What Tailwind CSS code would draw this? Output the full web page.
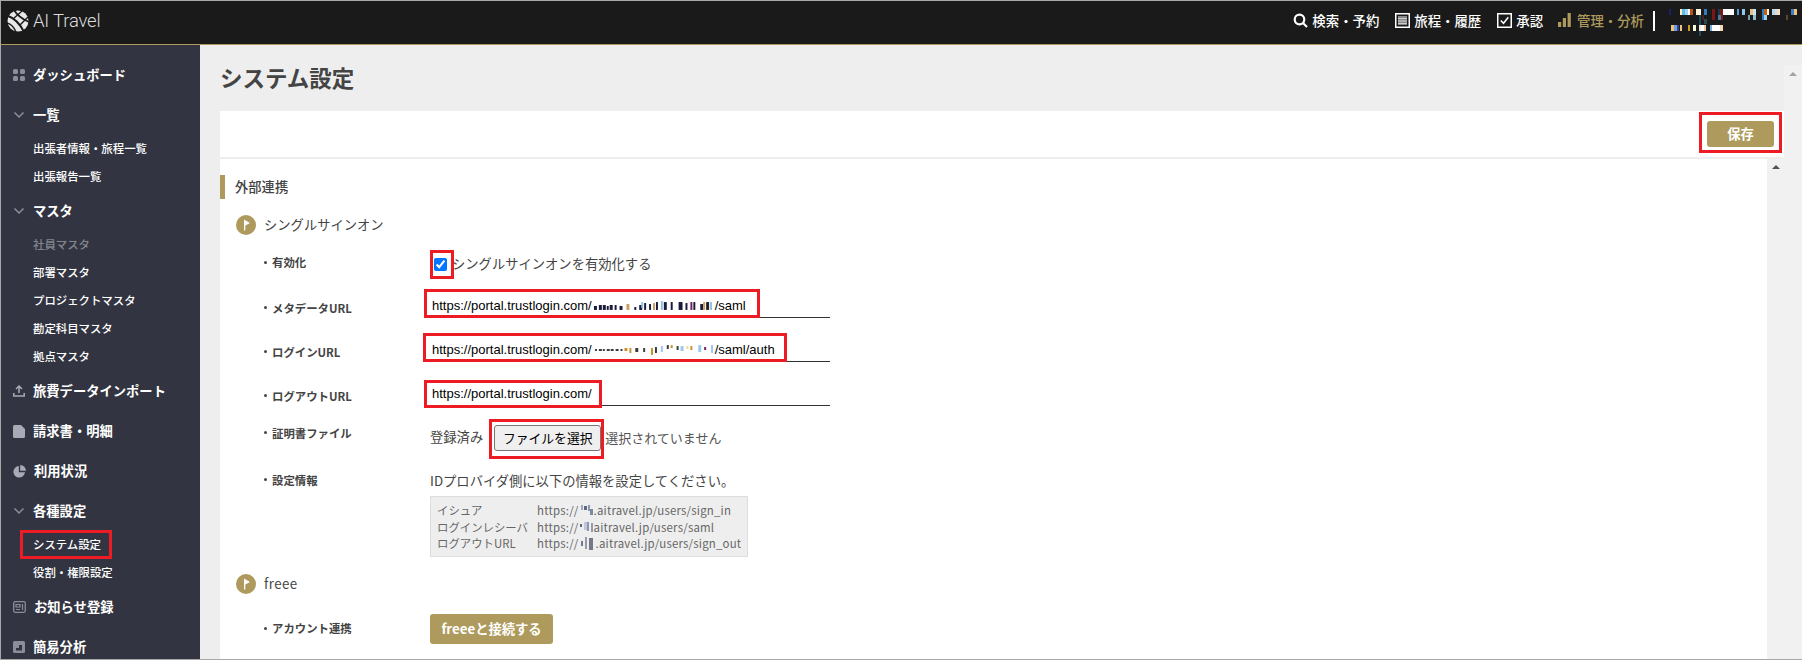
<!DOCTYPE html>
<html lang="ja">
<head>
<meta charset="utf-8">
<title>システム設定</title>
<script src="https://cdn.jsdelivr.net/npm/@tailwindcss/browser@4"></script>
</head>
<body class="bg-white">
<div class="relative w-[1802px] h-[660px] overflow-hidden font-['Noto_Sans_CJK_JP','Noto_Sans',sans-serif]">
  <div class="flex flex-col h-full border-t border-l border-b border-[#a8a8a8]">
    <!-- header -->
    <header class="flex h-[44px] shrink-0 items-center bg-[#1a1a1a] border-b border-[#ae9a5d]">
      <div class="flex items-center pl-[6px] pb-[3px] gap-[4px]">
        <svg width="22" height="22" viewBox="0 0 22 22">
          <circle cx="11" cy="11" r="10.5" fill="#e8e8e8"/>
          <g stroke="#1a1a1a" fill="none">
            <path d="M1 6 C7 8 12 12 17 22" stroke-width="2"/>
            <path d="M7 0 C10 5 15 9 22 12" stroke-width="1.8"/>
            <path d="M0 13 C4 14 7 17 9 22" stroke-width="1.4"/>
            <path d="M15 1 L6 9" stroke-width="1.4"/>
            <path d="M21 7 L13 15" stroke-width="1.4"/>
          </g>
        </svg>
        <span class="font-['Roboto',sans-serif] font-light text-[18.5px] leading-none tracking-[-0.2px] text-[#dddddd]">AI Travel</span>
      </div>
      <nav class="ml-auto flex items-center h-full text-[13.4px] font-medium text-white">
        <a class="flex items-center gap-[4px] pb-[4px]">
          <svg width="15" height="15" viewBox="0 0 15 15" fill="none" stroke="#fff" stroke-width="2.2"><circle cx="6.5" cy="6.5" r="4.8"/><path d="M10 10 L14 14"/></svg>
          検索・予約
        </a>
        <a class="flex items-center gap-[4px] ml-[16px] pb-[4px]">
          <svg width="15" height="15" viewBox="0 0 15 15"><rect x="0.75" y="0.75" width="13.5" height="13.5" fill="none" stroke="#fff" stroke-width="1.5"/><rect x="3" y="3" width="9" height="9" fill="#8a8a8a"/><path d="M3 5.5H12M3 8H12M3 10.5H12" stroke="#ddd" stroke-width="0.8"/></svg>
          旅程・履歴
        </a>
        <a class="flex items-center gap-[4px] ml-[16px] pb-[4px]">
          <svg width="15" height="15" viewBox="0 0 15 15" fill="none"><rect x="0.75" y="0.75" width="13.5" height="13.5" stroke="#fff" stroke-width="1.5"/><path d="M3.8 7.5 L6.5 10.3 L11.3 4.3" stroke="#fff" stroke-width="1.5"/></svg>
          承認
        </a>
        <a class="flex items-center gap-[6px] ml-[15px] pb-[4px] text-[#ae9a5d]">
          <svg width="13" height="14" viewBox="0 0 13 14" fill="#ae9a5d"><rect x="0" y="9" width="3.2" height="5"/><rect x="4.8" y="5" width="3.2" height="9"/><rect x="9.6" y="0" width="3.2" height="14"/></svg>
          管理・分析
        </a>
        <span class="w-[2px] h-[20px] bg-white ml-[9px] mb-[4px]"></span>
        <svg class="ml-[5px] self-start mt-[3px]" width="142" height="36" viewBox="0 0 142 36">
          <rect x="9" y="5" width="2" height="6" fill="#1a1f6e"/><rect x="20" y="5" width="2" height="6" fill="#fff0c8"/><rect x="22" y="5" width="3" height="6" fill="#5fb8e8"/><rect x="25" y="5" width="3" height="6" fill="#9cd4f0"/><rect x="28" y="5" width="2" height="6" fill="#fff"/><rect x="30" y="5" width="3" height="6" fill="#c0501c"/><rect x="36" y="5" width="5" height="6" fill="#fff4d8"/><rect x="44" y="5" width="3" height="6" fill="#2f7fc0"/><rect x="52" y="5" width="3" height="11" fill="#7a1818"/><rect x="58" y="5" width="2" height="6" fill="#1a3a50"/><rect x="60" y="5" width="3" height="11" fill="#7a1818"/><rect x="63" y="5" width="11" height="6" fill="#fff"/><rect x="77" y="5" width="2" height="6" fill="#4f9fd8"/><rect x="82" y="5" width="3" height="6" fill="#8fc8f0"/><rect x="90" y="5" width="3" height="6" fill="#f0c080"/><rect x="93" y="5" width="3" height="6" fill="#c0e8f4"/><rect x="102" y="5" width="2" height="6" fill="#2f7fc0"/><rect x="104" y="5" width="3" height="6" fill="#c0601c"/><rect x="107" y="5" width="2" height="6" fill="#fff8e0"/><rect x="112" y="5" width="3" height="6" fill="#b0d8e8"/><rect x="115" y="5" width="3" height="6" fill="#ddd"/><rect x="118" y="5" width="2" height="6" fill="#f8e0c0"/><rect x="131" y="5" width="3" height="6" fill="#4080c0"/><rect x="134" y="5" width="3" height="6" fill="#f0c080"/>
          <rect x="39" y="11" width="2" height="21" fill="#1a4a60"/><rect x="42" y="11" width="2" height="5" fill="#4a2020"/><rect x="44" y="15" width="3" height="5" fill="#2a4a50"/><rect x="58" y="11" width="3" height="5" fill="#4a7a9a"/><rect x="88" y="11" width="2" height="5" fill="#7aa0b0"/><rect x="93" y="11" width="3" height="5" fill="#90c0d8"/><rect x="102" y="11" width="2" height="5" fill="#2f7fc0"/><rect x="104" y="11" width="3" height="5" fill="#a0d0e8"/><rect x="126" y="11" width="2" height="5" fill="#5a4a2a"/>
          <rect x="11" y="21" width="3" height="6" fill="#e8c080"/><rect x="14" y="21" width="3" height="6" fill="#70a0d8"/><rect x="17" y="21" width="2" height="6" fill="#3040a0"/><rect x="20" y="21" width="2" height="6" fill="#f0c080"/><rect x="28" y="21" width="2" height="6" fill="#d09820"/><rect x="33" y="21" width="3" height="6" fill="#f0f8e0"/><rect x="39" y="21" width="2" height="6" fill="#f8e8d8"/><rect x="41" y="21" width="3" height="6" fill="#fff"/><rect x="44" y="21" width="2" height="6" fill="#e8c8a0"/><rect x="50" y="21" width="2" height="6" fill="#70b0e0"/><rect x="52" y="21" width="8" height="6" fill="#fff"/><rect x="60" y="21" width="3" height="6" fill="#f8d8b0"/>
        </svg>
      </nav>
    </header>

    <div class="flex flex-1 min-h-0">
      <!-- sidebar -->
      <aside class="w-[199px] shrink-0 bg-[#323541] pt-[10px] text-white overflow-hidden">
        <div class="flex h-[40px] items-center gap-[8px] pl-[12px] text-[13.3px] font-bold">
          <svg width="12" height="12" viewBox="0 0 12 12" fill="#8b8e9a"><rect x="0" y="0" width="5" height="5" rx="1.6"/><rect x="7" y="0" width="5" height="5" rx="1.6"/><rect x="0" y="7" width="5" height="5" rx="1.6"/><rect x="7" y="7" width="5" height="5" rx="1.6"/></svg>
          ダッシュボード
        </div>
        <div class="flex h-[40px] items-center gap-[8px] pl-[12px] text-[13.3px] font-bold">
          <svg width="12" height="12" viewBox="0 0 12 12" fill="none" stroke="#8b8e9a" stroke-width="1.5"><path d="M1.5 3.5 L6 8 L10.5 3.5"/></svg>
          一覧
        </div>
        <div class="flex h-[28px] items-center pl-[32px] text-[11.4px] font-medium">出張者情報・旅程一覧</div>
        <div class="flex h-[28px] items-center pl-[32px] text-[11.4px] font-medium">出張報告一覧</div>
        <div class="flex h-[40px] items-center gap-[8px] pl-[12px] text-[13.3px] font-bold">
          <svg width="12" height="12" viewBox="0 0 12 12" fill="none" stroke="#8b8e9a" stroke-width="1.5"><path d="M1.5 3.5 L6 8 L10.5 3.5"/></svg>
          マスタ
        </div>
        <div class="flex h-[28px] items-center pl-[32px] text-[11.4px] font-medium text-[#83858e]">社員マスタ</div>
        <div class="flex h-[28px] items-center pl-[32px] text-[11.4px] font-medium">部署マスタ</div>
        <div class="flex h-[28px] items-center pl-[32px] text-[11.4px] font-medium">プロジェクトマスタ</div>
        <div class="flex h-[28px] items-center pl-[32px] text-[11.4px] font-medium">勘定科目マスタ</div>
        <div class="flex h-[28px] items-center pl-[32px] text-[11.4px] font-medium">拠点マスタ</div>
        <div class="flex h-[40px] items-center gap-[8px] pl-[12px] text-[13.3px] font-bold">
          <svg width="12" height="12" viewBox="0 0 12 12" fill="none" stroke="#a8abb5" stroke-width="1.5"><path d="M6 8 V1.5 M3 4 L6 1 L9 4"/><path d="M0.8 8 V11 H11.2 V8"/></svg>
          旅費データインポート
        </div>
        <div class="flex h-[40px] items-center gap-[8px] pl-[12px] text-[13.3px] font-bold">
          <svg width="12" height="13" viewBox="0 0 12 13" fill="#a8abb5"><path d="M1.5 0 H8 L12 4 V11.5 a1.5 1.5 0 0 1 -1.5 1.5 H1.5 A1.5 1.5 0 0 1 0 11.5 V1.5 A1.5 1.5 0 0 1 1.5 0 Z"/></svg>
          請求書・明細
        </div>
        <div class="flex h-[40px] items-center gap-[8px] pl-[12px] text-[13.3px] font-bold">
          <svg width="13" height="13" viewBox="0 0 13 13" fill="#a8abb5"><path d="M5.8 1 A5.8 5.8 0 1 0 12 7.2 H5.8 Z"/><path d="M7.2 0 A5.8 5.8 0 0 1 13 5.8 H7.2 Z"/></svg>
          利用状況
        </div>
        <div class="flex h-[40px] items-center gap-[8px] pl-[12px] text-[13.3px] font-bold">
          <svg width="12" height="12" viewBox="0 0 12 12" fill="none" stroke="#8b8e9a" stroke-width="1.5"><path d="M1.5 3.5 L6 8 L10.5 3.5"/></svg>
          各種設定
        </div>
        <div class="flex h-[28px] items-center pl-[32px] text-[11.4px] font-medium">システム設定</div>
        <div class="flex h-[28px] items-center pl-[32px] text-[11.4px] font-medium">役割・権限設定</div>
        <div class="flex h-[40px] items-center gap-[8px] pl-[12px] text-[13.3px] font-bold">
          <svg width="13" height="12" viewBox="0 0 13 12" fill="none" stroke="#8b8e9a" stroke-width="1.3"><rect x="0.7" y="0.7" width="11.6" height="10.6" rx="1.5"/><path d="M3 3.5H7V6H3ZM3 8.5H7M9.5 3V9" stroke-width="1.2"/></svg>
          お知らせ登録
        </div>
        <div class="flex h-[40px] items-center gap-[8px] pl-[12px] text-[13.3px] font-bold">
          <svg width="12" height="12" viewBox="0 0 12 12"><rect width="12" height="12" rx="1.5" fill="#8b8e9a"/><path d="M3 9.5 V7 H6 V4 H9 V9.5 Z" fill="#323541"/></svg>
          簡易分析
        </div>
      </aside>

      <!-- main -->
      <main class="flex flex-1 min-w-0 bg-[#eeeeee]">
        <div class="flex flex-col flex-1 min-w-0 pl-[20px]">
          <h1 class="flex h-[66px] shrink-0 items-center text-[22.5px] font-bold text-[#444444]">システム設定</h1>
          <div class="flex h-[46px] shrink-0 items-center justify-end bg-white pr-[10px]">
            <button class="w-[67px] h-[26px] rounded-[3px] bg-[#ae9a5d] text-[13.3px] font-bold text-white">保存</button>
          </div>
          <div class="flex flex-1 min-h-0 mt-[2px]">
            <div class="flex-1 min-w-0 bg-white overflow-hidden text-[#444444]">
              <h2 class="mt-[16px] flex h-[24px] items-center border-l-[5px] border-[#ae9a5d] pl-[10px] text-[13.3px] font-medium">外部連携</h2>

              <h3 class="mt-[16px] ml-[16px] flex h-[20px] items-center gap-[8px] text-[13.3px] font-normal">
                <svg width="20" height="20" viewBox="0 0 20 20"><circle cx="10" cy="10" r="10" fill="#ae9a5d"/><path d="M8 4.5 L14 8 L9.3 10.6 V15.5 H8 Z" fill="#fff"/></svg>
                シングルサインオン
              </h3>

              <div class="mt-[15px] ml-[44px] flex h-[28px] items-center">
                <div class="w-[166px] flex items-center text-[11.4px] font-bold pb-[2px]"><span class="w-[3px] h-[3px] rounded-full bg-[#444444] mr-[5px]"></span>有効化</div>
                <label class="flex items-center text-[13.3px]"><input type="checkbox" checked class="w-[13px] h-[13px] ml-[4px] mr-[5px] accent-[#0075ff]">シングルサインオンを有効化する</label>
              </div>

              <div class="mt-[11px] ml-[44px] flex h-[29px]">
                <div class="w-[166px] flex items-start pt-[11px] text-[11.4px] font-bold leading-[16px]"><span class="w-[3px] h-[3px] rounded-full bg-[#444444] mr-[5px] mt-[6px]"></span>メタデータURL</div>
                <div class="-ml-[6px] w-[406px] h-[29px] border-b border-[#333333] pl-[8px] flex items-center pt-[5px] font-['Liberation_Sans',sans-serif] text-[13px] text-black">
                  https://portal.trustlogin.com/<svg width="123" height="10" viewBox="0 0 125 10" class="shrink-0"><g fill="#1a1a3a"><rect x="2" y="5" width="3" height="4"/><rect x="7" y="4" width="3" height="5"/><rect x="11" y="4" width="3" height="5"/><rect x="15" y="5" width="2" height="4"/><rect x="18" y="4" width="3" height="5"/><rect x="23" y="4" width="2" height="5"/><rect x="28" y="5" width="3" height="4"/><rect x="43" y="6" width="2" height="3"/><rect x="48" y="4" width="3" height="5"/><rect x="53" y="2" width="2" height="7"/><rect x="58" y="3" width="2" height="6"/><rect x="65" y="1" width="2" height="8"/><rect x="73" y="1" width="3" height="8"/><rect x="80" y="1" width="2" height="8"/><rect x="88" y="1" width="4" height="8"/><rect x="95" y="2" width="2" height="7"/><rect x="103" y="1" width="2" height="8"/><rect x="110" y="3" width="3" height="6"/></g><g fill="#c8a060"><rect x="35" y="3" width="3" height="6"/><rect x="62" y="2" width="2" height="7"/><rect x="113" y="1" width="2" height="8"/></g><g fill="#8fc0e8"><rect x="50" y="1" width="2" height="6"/><rect x="70" y="0" width="2" height="9"/><rect x="120" y="1" width="2" height="8"/></g><rect x="116" y="1" width="3" height="8" fill="#222"/><rect x="100" y="1" width="2" height="8" fill="#7a1a60"/></svg>/saml
                </div>
              </div>

              <div class="mt-[15px] ml-[44px] flex h-[29px]">
                <div class="w-[166px] flex items-start pt-[11px] text-[11.4px] font-bold leading-[16px]"><span class="w-[3px] h-[3px] rounded-full bg-[#444444] mr-[5px] mt-[6px]"></span>ログインURL</div>
                <div class="-ml-[6px] w-[406px] h-[29px] border-b border-[#333333] pl-[8px] flex items-center pt-[5px] font-['Liberation_Sans',sans-serif] text-[13px] text-black">
                  https://portal.trustlogin.com/<svg width="123" height="10" viewBox="0 0 125 10" class="shrink-0"><g fill="#3a3a3a"><rect x="3" y="4" width="2" height="2"/><rect x="7" y="4" width="3" height="2"/><rect x="11" y="4" width="2" height="2"/><rect x="15" y="4" width="3" height="2"/><rect x="19" y="4" width="3" height="2"/><rect x="24" y="4" width="3" height="2"/><rect x="29" y="4" width="2" height="2"/><rect x="44" y="3" width="3" height="4"/><rect x="52" y="3" width="2" height="4"/><rect x="64" y="2" width="2" height="6"/><rect x="76" y="0" width="2" height="4"/><rect x="86" y="1" width="2" height="4"/></g><g fill="#c8902c"><rect x="33" y="3" width="3" height="3"/><rect x="38" y="3" width="2" height="5"/><rect x="60" y="3" width="2" height="7"/><rect x="80" y="0" width="2" height="3"/><rect x="100" y="1" width="2" height="4"/></g><g fill="#9cc8ec"><rect x="70" y="1" width="2" height="6"/><rect x="90" y="1" width="3" height="5"/><rect x="108" y="0" width="3" height="7"/><rect x="121" y="0" width="2" height="8"/></g><rect x="96" y="1" width="2" height="3" fill="#f0d890"/><rect x="114" y="2" width="2" height="3" fill="#7a1a60"/></svg>/saml/auth
                </div>
              </div>

              <div class="mt-[15px] ml-[44px] flex h-[29px]">
                <div class="w-[166px] flex items-start pt-[11px] text-[11.4px] font-bold leading-[16px]"><span class="w-[3px] h-[3px] rounded-full bg-[#444444] mr-[5px] mt-[6px]"></span>ログアウトURL</div>
                <div class="-ml-[6px] w-[406px] h-[29px] border-b border-[#333333] pl-[8px] flex items-center pt-[5px] font-['Liberation_Sans',sans-serif] text-[13px] text-black">https://portal.trustlogin.com/</div>
              </div>

              <div class="mt-[18px] ml-[44px] flex h-[28px]">
                <div class="w-[166px] flex items-start pt-[1px] text-[11.4px] font-bold leading-[16px]"><span class="w-[3px] h-[3px] rounded-full bg-[#444444] mr-[5px] mt-[6px]"></span>証明書ファイル</div>
                <div class="flex items-center text-[13.3px]">
                  <span class="pb-[2px]">登録済み</span>
                  <button class="ml-[11px] w-[107px] h-[26px] rounded-[3px] border border-[#767676] bg-[#efefef] text-[12.8px] text-black">ファイルを選択</button>
                  <span class="ml-[4px] text-[13px] text-[#555555]">選択されていません</span>
                </div>
              </div>

              <div class="mt-[20px] ml-[44px] flex">
                <div class="w-[166px] flex items-start text-[11.4px] font-bold leading-[16px]"><span class="w-[3px] h-[3px] rounded-full bg-[#444444] mr-[5px] mt-[6px]"></span>設定情報</div>
                <div>
                  <p class="text-[13.3px] leading-[18px]">IDプロバイダ側に以下の情報を設定してください。</p>
                  <div class="mt-[6px] w-[318px] h-[61px] border border-[#dddddd] bg-[#eeeeee] pl-[6px] pt-[5px] text-[11.4px] leading-[16.5px] text-[#666666]">
                    <div class="flex"><span class="w-[100px] shrink-0">イシュア</span><span class="flex items-center tracking-[0.22px]">https://<svg width="15" height="13" viewBox="0 0 15 13" class="shrink-0"><rect x="2" y="1" width="2" height="5" fill="#9aa8c8"/><rect x="5" y="2" width="3" height="4" fill="#667"/><rect x="9" y="1" width="2" height="6" fill="#8a98b8"/><rect x="11" y="5" width="3" height="6" fill="#7a8a9a"/></svg>.aitravel.jp/users/sign_in</span></div>
                    <div class="flex"><span class="w-[100px] shrink-0">ログインレシーバ</span><span class="flex items-center tracking-[0.22px]">https://<svg width="15" height="13" viewBox="0 0 15 13" class="shrink-0"><rect x="1" y="4" width="2" height="3" fill="#667"/><rect x="5" y="2" width="3" height="8" fill="#c0c8d8"/><rect x="8" y="2" width="2" height="9" fill="#8a98b8"/><rect x="12" y="3" width="2" height="9" fill="#99a"/></svg>aitravel.jp/users/saml</span></div>
                    <div class="flex"><span class="w-[100px] shrink-0">ログアウトURL</span><span class="flex items-center tracking-[0.22px]">https://<svg width="17" height="15" viewBox="0 0 17 15" class="shrink-0"><rect x="2" y="5" width="2" height="5" fill="#778"/><rect x="6" y="1" width="2" height="12" fill="#99a"/><rect x="10" y="2" width="4" height="12" fill="#778"/></svg>.aitravel.jp/users/sign_out</span></div>
                  </div>
                </div>
              </div>

              <h3 class="mt-[17px] ml-[16px] flex h-[20px] items-center gap-[8px] text-[13.3px] font-normal tracking-[0.4px]">
                <svg width="20" height="20" viewBox="0 0 20 20"><circle cx="10" cy="10" r="10" fill="#ae9a5d"/><path d="M8 4.5 L14 8 L9.3 10.6 V15.5 H8 Z" fill="#fff"/></svg>
                freee
              </h3>

              <div class="mt-[20px] ml-[44px] flex h-[30px] items-center">
                <div class="w-[166px] flex items-center text-[11.4px] font-bold"><span class="w-[3px] h-[3px] rounded-full bg-[#444444] mr-[5px]"></span>アカウント連携</div>
                <button class="w-[123px] h-[30px] rounded-[3px] bg-[#ae9a5d] text-[13.3px] font-bold text-white">freeeと接続する</button>
              </div>
            </div>
            <div class="w-[17px] shrink-0 bg-[#f1f1f1] flex justify-center pt-[6px]">
              <span class="w-0 h-0 border-x-[4px] border-x-transparent border-b-[4px] border-b-[#505050]"></span>
            </div>
          </div>
        </div>
        <div class="w-[18px] shrink-0 mt-[20px] bg-[#f1f1f1] flex justify-center pt-[7px]">
          <span class="w-0 h-0 border-x-[4px] border-x-transparent border-b-[4px] border-b-[#a3a3a3]"></span>
        </div>
      </main>
    </div>
  </div>

  <!-- red annotation frames lying over the screenshot -->
  <div class="absolute left-[20px] top-[530px] w-[92px] h-[29px] border-[3px] border-[#ed1c24]"></div>
  <div class="absolute left-[1699px] top-[112px] w-[83px] h-[41px] border-[3px] border-[#ed1c24]"></div>
  <div class="absolute left-[430px] top-[250px] w-[24px] h-[29px] border-[3px] border-[#ed1c24]"></div>
  <div class="absolute left-[424px] top-[289px] w-[336px] h-[29px] border-[3px] border-[#ed1c24]"></div>
  <div class="absolute left-[423px] top-[333px] w-[364px] h-[29px] border-[3px] border-[#ed1c24]"></div>
  <div class="absolute left-[424px] top-[380px] w-[178px] h-[28px] border-[3px] border-[#ed1c24]"></div>
  <div class="absolute left-[489px] top-[419px] w-[115px] h-[40px] border-[3px] border-[#ed1c24]"></div>
</div>
</body>
</html>
